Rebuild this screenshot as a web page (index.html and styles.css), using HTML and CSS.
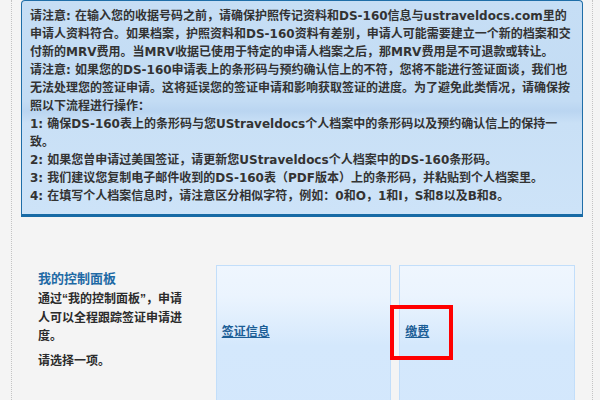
FILE: index.html
```html
<!DOCTYPE html>
<html>
<head>
<meta charset="utf-8">
<link rel="stylesheet" href="styles.css">
</head>
<body>
<div class="page">
  <div class="notice">
    <p>请注意: 在输入您的收据号码之前，请确保护照传记资料和DS-160信息与ustraveldocs.com里的申请人资料符合。如果档案，护照资料和DS-160资料有差别，申请人可能需要建立一个新的档案和交付新的MRV费用。当MRV收据已使用于特定的申请人档案之后，那MRV费用是不可退款或转让。</p>
    <p>请注意: 如果您的DS-160申请表上的条形码与预约确认信上的不符，您将不能进行签证面谈，我们也无法处理您的签证申请。这将延误您的签证申请和影响获取签证的进度。为了避免此类情况，请确保按照以下流程进行操作：</p>
    <p>1: 确保DS-160表上的条形码与您UStraveldocs个人档案中的条形码以及预约确认信上的保持一致。</p>
    <p>2: 如果您曾申请过美国签证，请更新您UStraveldocs个人档案中的DS-160条形码。</p>
    <p>3: 我们建议您复制电子邮件收到的DS-160表（PDF版本）上的条形码，并粘贴到个人档案里。</p>
    <p>4: 在填写个人档案信息时，请注意区分相似字符，例如：0和O，1和I，S和8以及B和8。</p>
  </div>
  <div class="dash">
    <div class="intro">
      <h3 class="intro-title">我的控制面板</h3>
      <p class="intro-text">通过<span class="q">“</span>我的控制面板<span class="q">”</span>，申请人可以全程跟踪签证申请进度。</p>
      <p class="intro-text">请选择一项。</p>
    </div>
    <div class="card"><a class="card-link" href="#">签证信息</a></div>
    <div class="card"><a class="card-link" href="#">缴费</a><span class="highlight"></span></div>
  </div>
</div>
</body>
</html>
```

FILE: styles.css
```css
html, body {
  margin: 0;
  padding: 0;
  background: #f4f4f4;
  height: 100%;
  overflow: hidden;
}
body {
  font-family: "DejaVu Sans", "Noto Sans CJK SC", sans-serif;
  font-size: 12px;
  font-weight: bold;
  color: #333333;
}
.page {
  margin-left: 11px;
  width: 582px;
  height: 100%;
  border-left: 1px dotted #c4c4c4;
  border-right: 1px dotted #c4c4c4;
  padding: 0 9px;
  box-sizing: border-box;
}
.notice {
  width: 562px;
  box-sizing: border-box;
  border: 1px solid #1f6ea8;
  border-bottom: 3px solid #176aa5;
  border-radius: 4px 4px 0 0;
  background: linear-gradient(to bottom, #c6def5 0, #c3dcf4 100px, #bad5f1 110px, #c9e0f6 122px, #cde3f8 100%);
  padding: 6px 7px 9px 8px;
  line-height: 18px;
}
.notice p {
  margin: 0;
}
.dash {
  display: flex;
  align-items: flex-start;
  padding-top: 48px;
}
.intro {
  width: 150px;
  padding-left: 17px;
  margin-right: 28px;
  padding-top: 5px;
}
.intro-title {
  margin: 0;
  font-size: 13px;
  line-height: 18px;
  color: #1f6aa5;
  padding-bottom: 2px;
}
.intro-text {
  margin: 0 0 6px 0;
  line-height: 18.5px;
  color: #2b2b2b;
}
.q {
  font-family: "Liberation Sans", sans-serif;
}
.card {
  position: relative;
  width: 176px;
  height: 160px;
  margin-right: 8px;
  box-sizing: border-box;
  border: 1px solid #c2defa;
  background: linear-gradient(to bottom, #eff6fe 0, #ebf4fe 30px, #d4e8fc 80px, #d3e7fc 100%);
  padding: 57px 5px 0 5px;
}
.card-link {
  color: #1c5e96;
  text-decoration: underline;
  line-height: 18px;
}
.highlight {
  position: absolute;
  left: -10px;
  top: 39px;
  width: 63px;
  height: 55px;
  box-sizing: border-box;
  border: 4px solid #ff0000;
}
```
